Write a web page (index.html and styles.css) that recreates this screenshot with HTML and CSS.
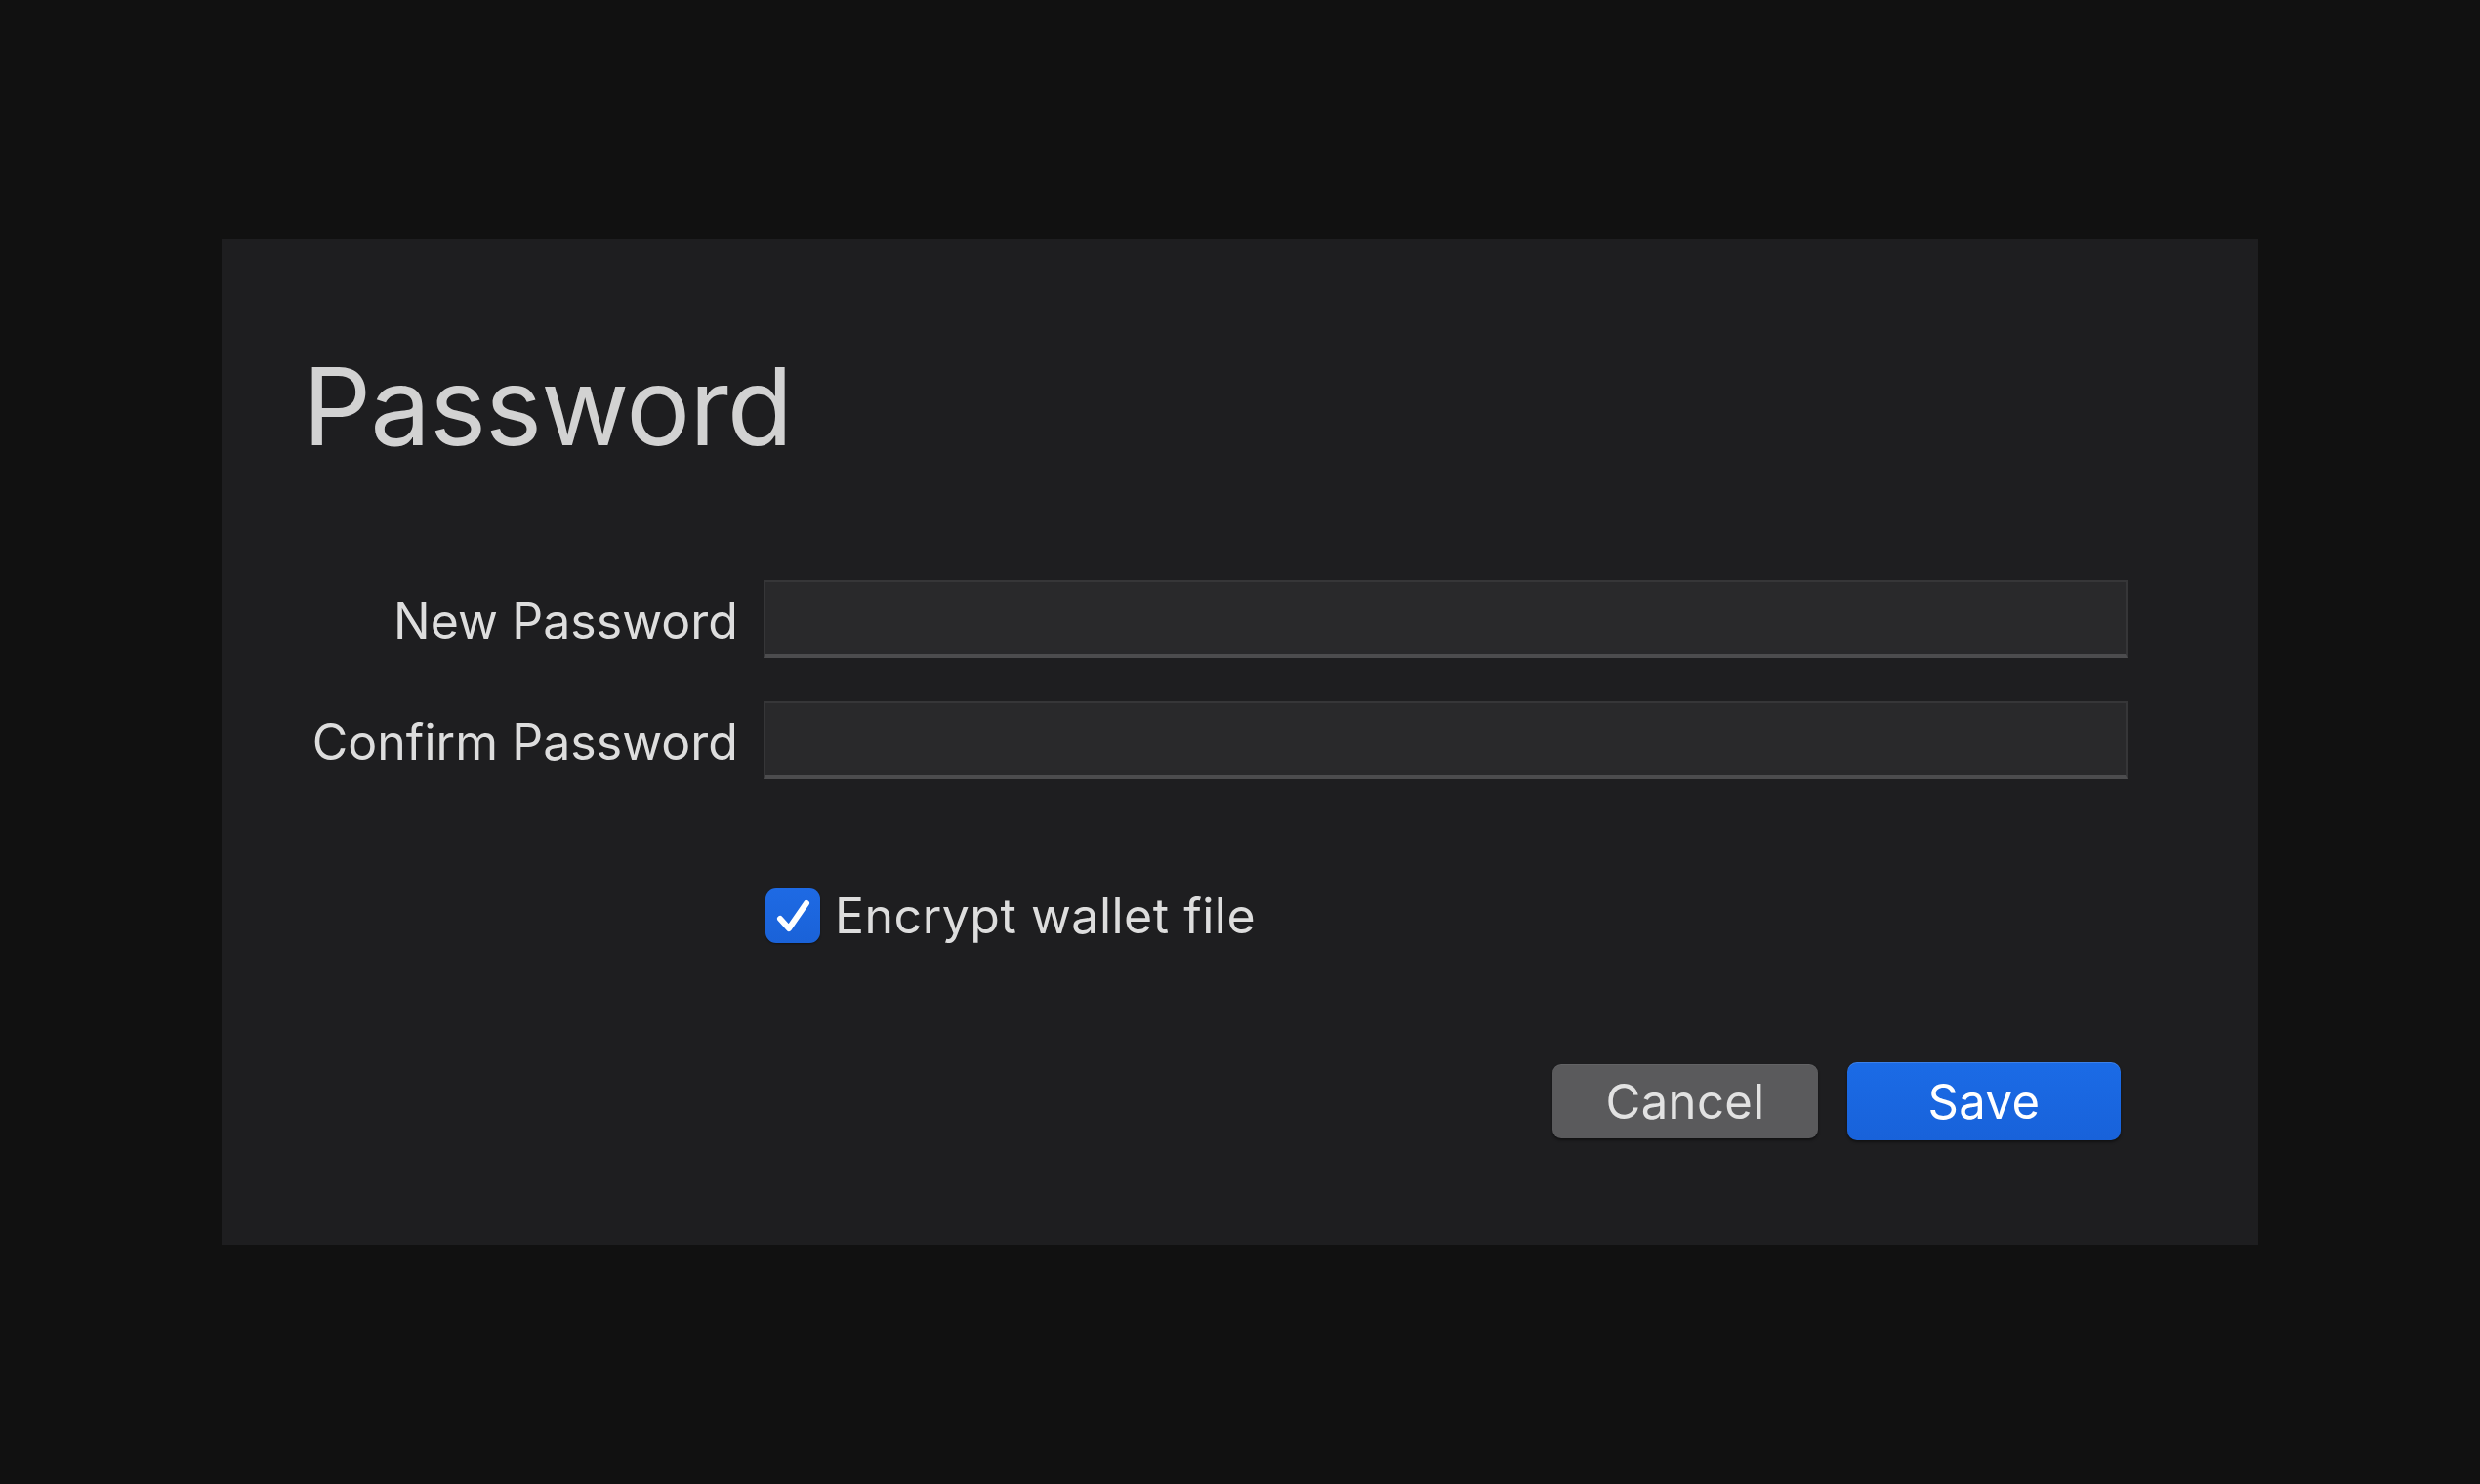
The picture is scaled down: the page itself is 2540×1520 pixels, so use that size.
FILE: index.html
```html
<!DOCTYPE html>
<html lang="en">
<head>
<meta charset="utf-8">
<title>Password</title>
<link rel="stylesheet" href="styles.css">
</head>
<body>
<div class="page">
  <section class="dialog">
    <h1 class="title">Password</h1>
    <div class="form">
      <label class="label" for="newpw">New Password</label>
      <input class="field" id="newpw" type="password">
      <label class="label" for="confpw">Confirm Password</label>
      <input class="field" id="confpw" type="password">
    </div>
    <div class="check-row">
      <span class="checkbox">
        <svg viewBox="0 0 56 56" width="56" height="56"><polyline points="15,31 24,41 42,15" fill="none" stroke="#ffffff" stroke-width="6" stroke-linecap="round" stroke-linejoin="round"/></svg>
      </span>
      <span class="check-label">Encrypt wallet file</span>
    </div>
    <div class="actions">
      <button class="btn btn-cancel">Cancel</button>
      <button class="btn btn-save">Save</button>
    </div>
  </section>
</div>
</body>
</html>
```

FILE: styles.css
```css
html, body {
  margin: 0;
  padding: 0;
  background: #111111;
  height: 100%;
}
body {
  font-family: Inter, "Noto Sans", "Liberation Sans", sans-serif;
}
.page {
  padding-top: 245px;
  padding-left: 227px;
}
.dialog {
  box-sizing: border-box;
  width: 2086px;
  height: 1030px;
  background: #1e1e20;
  padding: 116px 134px 0 83px;
  display: flex;
  flex-direction: column;
}
.title {
  margin: 0;
  font-size: 110px;
  line-height: 110px;
  font-weight: 400;
  color: #d2d2d2;
  letter-spacing: -1px;
}
.form {
  margin-top: 123px;
  display: grid;
  grid-template-columns: 1fr 1397px;
  column-gap: 25px;
  row-gap: 44px;
  align-items: center;
}
.label {
  text-align: right;
  font-size: 50px;
  line-height: 60px;
  color: #dddddd;
  padding-top: 4px;
  padding-right: 1px;
  letter-spacing: 0.05px;
}
.field {
  box-sizing: border-box;
  height: 80px;
  width: 1397px;
  margin: 0;
  background: #29292b;
  border: 2px solid #363638;
  border-bottom: 4px solid #4c4c4e;
  outline: none;
  padding: 0 16px;
  color: #ddd;
  font-size: 40px;
}
.check-row {
  margin-top: 110px;
  margin-left: 474px;
  display: flex;
  align-items: center;
  gap: 15px;
}
.checkbox {
  width: 56px;
  height: 56px;
  border-radius: 11px;
  background: linear-gradient(#1e6ae4, #1a62d8);
  display: flex;
  box-shadow: 0 1px 2px rgba(0,0,0,0.4);
}
.checkbox svg {
  display: block;
}
.check-label {
  font-size: 50px;
  line-height: 60px;
  color: #dddddd;
  letter-spacing: 0.5px;
}
.actions {
  margin-top: 120px;
  margin-right: 7px;
  display: flex;
  justify-content: flex-end;
  align-items: center;
  gap: 30px;
}
.btn {
  font-family: Inter, "Noto Sans", "Liberation Sans", sans-serif;
  font-size: 49px;
  letter-spacing: 0.4px;
  border: none;
  padding: 0;
  margin: 0;
  cursor: pointer;
}
.btn-cancel {
  width: 272px;
  height: 76px;
  border-radius: 9px;
  background: #5a5a5c;
  color: #e2e2e2;
  box-shadow: 0 2px 3px rgba(0,0,0,0.45), inset 0 1px 0 rgba(255,255,255,0.06);
}
.btn-save {
  width: 280px;
  height: 80px;
  border-radius: 10px;
  background: linear-gradient(#1b6be6, #1862da);
  color: #ffffff;
  box-shadow: 0 2px 3px rgba(0,0,0,0.45), inset 0 1px 0 rgba(255,255,255,0.15);
}
```
